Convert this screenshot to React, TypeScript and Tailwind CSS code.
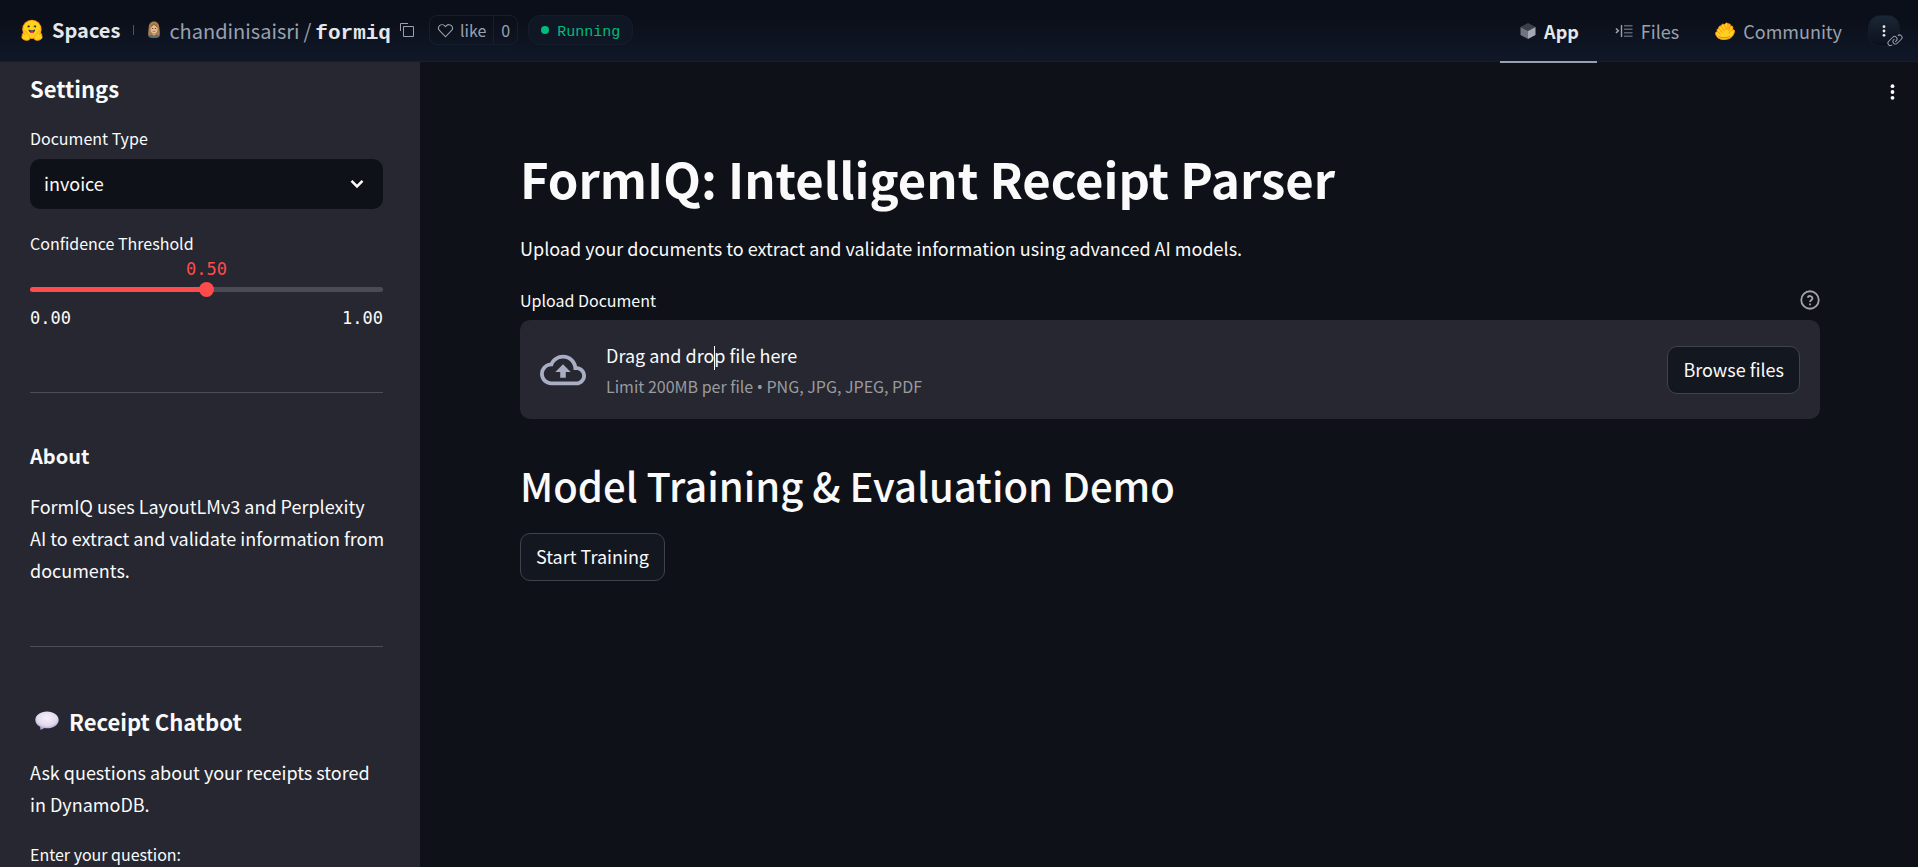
import { useState } from "react";

function HuggingLogo() {
  return (
    <svg viewBox="0 0 95 88" className="h-[22px] w-6 shrink-0" aria-hidden="true">
      <circle cx="47.2" cy="41.7" r="38.7" fill="#ff9d0b" />
      <circle cx="47.2" cy="41.7" r="34.7" fill="#ffd21e" />
      <path fill="#3a3b45" d="M58.5 32.3c1.28.44 1.78 3.06 3.07 2.38a5 5 0 1 0-6.76-2.07c.61 1.15 2.55-.72 3.7-.32ZM34.95 32.3c-1.28.44-1.79 3.06-3.07 2.38a5 5 0 1 1 6.76-2.07c-.61 1.15-2.56-.72-3.7-.32Z" />
      <path fill="#3a3b45" d="M46.96 56.29c9.83 0 13-8.76 13-13.26 0-2.34-1.57-1.6-4.09-.36-2.33 1.15-5.46 2.74-8.9 2.74-7.19 0-13-6.88-13-2.38s3.16 13.26 13 13.26Z" />
      <path fill="#ff323d" d="M39.4 53.5a8.7 8.7 0 0 1 7.6-4.6c3.5 0 6.400 1.900 7.800 4.700a13 13 0 0 1-15.400-.1Z" />
      <path fill="#ffd21e" stroke="#ff9d0b" strokeWidth="3.500" strokeLinejoin="round" d="M18 47c-4 0-5 4-3 8l3 7c-3-5-8-6-9-2-1 2 0 4 1 5-3 0-4 3-2 6-2 2-2 4 0 6 4 6 14 9 22 8 7-1 11-6 9-12-1-5-6-9-11-13-2-4-5-13-10-13Z" />
      <path fill="#ffd21e" stroke="#ff9d0b" strokeWidth="3.500" strokeLinejoin="round" d="M77 47c4 0 5 4 3 8l-3 7c3-5 8-6 9-2 1 2 0 4-1 5 3 0 4 3 2 6 2 2 2 4 0 6-4 6-14 9-22 8-7-1-11-6-9-12 1-5 6-9 11-13 2-4 5-13 10-13Z" />
    </svg>
  );
}

function Avatar() {
  return (
    <svg viewBox="0 0 14 18" className="h-[18px] w-3.5 shrink-0" aria-hidden="true">
      <path d="M7 .5C3.500.5 2 3 1.700 6.500c-.3 3-.9 6-.2 8.500C3 17 11 17 12.500 15c.7-2.500.1-5.500-.2-8.500C12 3 10.500.5 7 .5Z" fill="#a87d4f" />
      <path d="M1.500 15.500c1-1.500 3-2 5.500-2s4.500.5 5.500 2c-1.500 2-9.500 2-11 0Z" fill="#5d6b74" />
      <path d="M5.500 11h3v3c-1 .8-2 .8-3 0Z" fill="#cf9c72" />
      <ellipse cx="7" cy="7.800" rx="3.500" ry="4.500" fill="#e5bd95" />
      <path d="M3.400 7C3.600 4.500 5 3 7 2.800 9 3 10.400 4.500 10.600 7 9.500 5.800 8 4.800 7 3.800 6 4.800 4.500 5.800 3.400 7Z" fill="#8d6239" />
      <path d="M4.800 7.500h1.400M7.800 7.500h1.400" stroke="#5a3a22" strokeWidth=".9" />
      <path d="M5.700 10.300h2.600" stroke="#a9523f" strokeWidth=".8" />
    </svg>
  );
}

function CopyIcon() {
  return (
    <svg viewBox="0 0 32 32" className="size-4" fill="currentColor" aria-hidden="true">
      <path d="M28 10v18H10V10h18m0-2H10a2 2 0 0 0-2 2v18a2 2 0 0 0 2 2h18a2 2 0 0 0 2-2V10a2 2 0 0 0-2-2Z" />
      <path d="M4 18H2V4a2 2 0 0 1 2-2h14v2H4Z" />
    </svg>
  );
}

function HeartIcon() {
  return (
    <svg viewBox="0 0 32 32" className="size-[17px]" fill="currentColor" aria-hidden="true">
      <path d="M22.450 6a5.470 5.470 0 0 1 3.910 1.640 5.700 5.700 0 0 1 0 8L16 26.130 5.640 15.640a5.700 5.700 0 0 1 0-8 5.480 5.480 0 0 1 7.820 0L16 10.240l2.530-2.580A5.440 5.440 0 0 1 22.450 6m0-2a7.470 7.470 0 0 0-5.340 2.240L16 7.360l-1.110-1.120a7.490 7.490 0 0 0-10.680 0 7.720 7.720 0 0 0 0 10.820L16 29l11.790-11.940a7.720 7.720 0 0 0 0-10.820A7.490 7.490 0 0 0 22.450 4Z" />
    </svg>
  );
}

function CubeIcon() {
  return (
    <svg viewBox="0 0 16 18" className="h-[18px] w-4" aria-hidden="true">
      <path d="M8 1 15.500 5 8 9 .5 5Z" fill="#3b3f49" />
      <path d="M.5 5 8 9v8L.5 13Z" fill="#6f7480" />
      <path d="M15.500 5 8 9v8l7.500-4Z" fill="#a3a8b4" />
    </svg>
  );
}

function FilesIcon() {
  return (
    <svg viewBox="0 0 18 14" className="h-3.5 w-[18px]" fill="none" aria-hidden="true">
      <path d="M1 4.500 3.300 6.800 1 9" stroke="#9ca3af" strokeWidth="1.600" />
      <path d="M6.500 1v12" stroke="#9ca3af" strokeWidth="1.400" />
      <path d="M9 1.700h8.500M9 5.200h8.500M9 8.700h8.500M9 12.200h8.500" stroke="#5b616d" strokeWidth="1.400" />
    </svg>
  );
}

function HandIcon() {
  return (
    <svg viewBox="0 0 20 18" className="h-[18px] w-5" aria-hidden="true">
      <path
        d="M.8 12.500C.2 11 1 9.800 2.400 9.600 1.600 7.800 2.400 6.600 3.800 6.600 3.400 4.800 4.600 3.600 6 4.200 6.200 2.400 8 1.600 9.300 2.700L10.500 1.500c1-.9 2.300-.5 2.500.7 1.100-.8 2.500-.1 2.300 1.300l-.3 1.300.8-.6c1.200-.6 2.300.3 2 1.600L17.300 8c1.500-.7 2.500.2 2.100 1.700-.5 1.800-1 3.400-2.400 4.900-1.800 1.900-4.600 2.900-8 2.900-4.500 0-7.300-2-8.200-5Z"
        fill="#ffd021"
        stroke="#ff9d0b"
      />
      <path d="M2.400 9.600 5.200 12M3.800 6.600 7.300 10.300M6 4.200 9.400 8.700M9.300 2.700 11.500 7.500M13 2.200 12.900 7.200M15 4.800 13.700 8.500M17.300 8c-1.700.5-3 1.600-3.300 3.200" fill="none" stroke="#f59300" strokeWidth=".9" strokeLinecap="round" />
      <path d="M3.800 14.600c3 1.600 7.500 1.600 11 0" fill="none" stroke="#d98a1c" strokeWidth="1" strokeLinecap="round" />
    </svg>
  );
}

function Kebab({ className }: { className: string }) {
  return (
    <svg viewBox="0 0 6 20" className={className} fill="currentColor" aria-hidden="true">
      <circle cx="3" cy="3.500" r="2.100" />
      <circle cx="3" cy="10" r="2.100" />
      <circle cx="3" cy="16.500" r="2.100" />
    </svg>
  );
}

function LinkIcon() {
  return (
    <svg viewBox="0 0 32 32" className="size-4" fill="currentColor" aria-hidden="true">
      <path d="M29.250 6.760a6 6 0 0 0-8.500 0l1.420 1.420a4 4 0 1 1 5.670 5.670l-8 8a4 4 0 1 1-5.670-5.660l1.410-1.420-1.410-1.420-1.420 1.420a6 6 0 0 0 0 8.500A6 6 0 0 0 17 25a6 6 0 0 0 4.270-1.760l8-8a6 6 0 0 0-.02-8.480Z" />
      <path d="M4.190 24.820a4 4 0 0 1 0-5.670l8-8a4 4 0 0 1 5.670 0A3.940 3.940 0 0 1 19 14a4 4 0 0 1-1.170 2.850L15.710 19l1.420 1.420 2.120-2.120a6 6 0 0 0-8.510-8.510l-8 8a6 6 0 0 0 0 8.510A6 6 0 0 0 7 28a6.070 6.070 0 0 0 4.280-1.760l-1.420-1.420a4 4 0 0 1-5.670 0Z" />
    </svg>
  );
}

function SpeechBubble() {
  return (
    <svg viewBox="0 0 24 20" className="h-5 w-6 shrink-0" aria-hidden="true">
      <defs>
        <radialGradient id="bubble" cx=".5" cy=".35" r=".65">
          <stop offset="0" stopColor="#f6f1fa" />
          <stop offset=".65" stopColor="#e3d9ee" />
          <stop offset="1" stopColor="#a996c6" />
        </radialGradient>
      </defs>
      <path d="M12 .5c6.500 0 11.700 3.600 11.700 8.400S18.500 17.300 12 17.300c-1 0-1.900-.1-2.800-.2-1.300 1-2.700 1.700-4.400 1.700.6-.8.700-2 .3-3C2.200 14.200.3 11.700.3 8.900.3 4.100 5.500.5 12 .5Z" fill="url(#bubble)" />
    </svg>
  );
}

function CloudUpload() {
  return (
    <svg viewBox="0 0 24 24" className="size-[46px]" fill="currentColor" aria-hidden="true">
      <path d="M19.350 10.040A7.490 7.490 0 0 0 12 4C9.110 4 6.600 5.640 5.350 8.040A5.994 5.994 0 0 0 0 14c0 3.310 2.690 6 6 6h13c2.760 0 5-2.240 5-5 0-2.640-2.050-4.780-4.650-4.960ZM19 18H6c-2.210 0-4-1.790-4-4s1.790-4 4-4h.71C7.370 7.690 9.480 6 12 6c3.040 0 5.500 2.460 5.500 5.500v.5H19c1.660 0 3 1.340 3 3s-1.340 3-3 3ZM8 13h2.550v3h2.900v-3H16l-4-4-4 4Z" />
    </svg>
  );
}

function Header() {
  return (
    <header className="flex h-[62px] shrink-0 items-center justify-between border-b border-[#171d2c] bg-linear-to-b from-[#0b0f19] from-30% to-[#101828] pr-[18px] pl-5 text-lg text-gray-400">
      <div className="flex items-center">
        <a href="#spaces" className="flex items-center gap-2 text-xl font-bold text-gray-200">
          <HuggingLogo />
          Spaces
        </a>
        <span className="mx-[13px] h-2.5 w-px bg-gray-600" />
        <div className="flex items-center gap-2">
          <Avatar />
          <div className="flex items-baseline gap-1 pt-1 text-xl">
            <a href="#owner">chandinisaisri</a>
            <span>/</span>
            <a href="#formiq" className="font-['Liberation_Mono',monospace] text-[21px] font-bold text-gray-200">formiq</a>
          </div>
          <button type="button" aria-label="Copy space name"><CopyIcon /></button>
        </div>
        <div className="ml-3.5 flex h-[30px] items-center rounded-lg border border-[#171e2d] text-base">
          <button type="button" className="flex h-full items-center gap-1.5 border-r border-[#171e2d] px-[7px]">
            <HeartIcon />
            like
          </button>
          <button type="button" className="px-[7px]">0</button>
        </div>
        <div className="ml-2.5 flex h-[30px] items-center gap-2 rounded-xl border border-[#151d2d] bg-[#101724] px-3 text-[15px] text-[#00bc7d]">
          <span className="size-2 rounded-full bg-[#00bc7d]" />
          <span className="pt-1 font-['Liberation_Mono',monospace]">Running</span>
        </div>
      </div>
      <nav className="flex h-full items-center">
        <a href="#app" className="relative flex h-full items-center gap-2 pr-[18px] pl-5 font-bold text-gray-200 after:absolute after:inset-x-0 after:-bottom-0.5 after:h-0.5 after:bg-gray-400">
          <CubeIcon />
          App
        </a>
        <a href="#files" className="flex h-full items-center gap-2 px-[18px]">
          <FilesIcon />
          Files
        </a>
        <a href="#community" className="flex h-full items-center gap-2 px-[18px]">
          <HandIcon />
          Community
        </a>
        <button type="button" aria-label="More options" className="relative ml-2 flex size-8 items-center justify-center rounded-xl border border-[#151c2a] bg-linear-to-b from-[#1b2636] to-[#0c111c] text-gray-200">
          <Kebab className="h-3.5 w-1" />
          <span className="absolute -right-1 -bottom-0.5 text-gray-400"><LinkIcon /></span>
        </button>
      </nav>
    </header>
  );
}

function Sidebar() {
  const [threshold, setThreshold] = useState(0.5);
  const filled = `${threshold * 100}%`;
  return (
    <aside className="w-[420px] shrink-0 overflow-hidden bg-[#262730] pr-[35px] pl-[30px] text-lg leading-8">
      <div className="pr-0.5">
        <h2 className="pt-2.5 text-[22px] leading-8 font-bold">Settings</h2>
        <div className="mt-[22px] flex flex-col">
          <label htmlFor="doc-type" className="text-base leading-6">Document Type</label>
          <div className="relative mt-[9px]">
            <select id="doc-type" className="h-[50px] w-full appearance-none rounded-[10px] bg-[#0e1117] px-3.5 pb-0.5 text-lg">
              <option>invoice</option>
              <option>receipt</option>
            </select>
            <svg viewBox="0 0 14 10" className="pointer-events-none absolute top-5 right-[19px] h-2.5 w-3.5" fill="none" aria-hidden="true">
              <path d="M1.500 1.800 7 7.300l5.500-5.500" stroke="#fafafa" strokeWidth="2.600" />
            </svg>
          </div>
        </div>
        <div className="mt-[22px] flex flex-col">
          <label htmlFor="threshold" className="text-base leading-6">Confidence Threshold</label>
          <output htmlFor="threshold" className="mt-0.5 self-center font-['DejaVu_Sans_Mono',monospace] text-[17px] leading-6 text-[#ff4b4b]">{threshold.toFixed(2)}</output>
          <input
            id="threshold"
            type="range"
            min="0"
            max="1"
            step="0.05"
            value={threshold}
            onChange={(e) => setThreshold(Number(e.target.value))}
            style={{ backgroundImage: `linear-gradient(to right, #ff4b4b ${filled}, #4a4b55 ${filled})` }}
            className="mt-1.5 h-[5px] w-full appearance-none rounded-full [&::-webkit-slider-thumb]:size-[15px] [&::-webkit-slider-thumb]:appearance-none [&::-webkit-slider-thumb]:rounded-full [&::-webkit-slider-thumb]:bg-[#ff4b4b]"
          />
          <div className="mt-3.5 flex justify-between font-['DejaVu_Sans_Mono',monospace] text-[17px] leading-6">
            <span>0.00</span>
            <span>1.00</span>
          </div>
        </div>
        <hr className="mt-[62px] border-[#4c4d56]" />
      </div>
      <h3 className="mt-[47px] text-xl leading-8 font-bold">About</h3>
      <p className="mt-[18px]">FormIQ uses LayoutLMv3 and Perplexity AI&nbsp;to extract and validate information from documents.</p>
      <hr className="mt-[60px] mr-0.5 border-[#4c4d56]" />
      <h3 className="mt-[58px] flex items-center gap-2.5 pl-[5px] text-[22px] leading-8 font-bold">
        <SpeechBubble />
        Receipt Chatbot
      </h3>
      <p className="mt-[19px]">Ask questions about your receipts stored in DynamoDB.</p>
      <div className="mt-[22px] mr-0.5 flex flex-col gap-2">
        <label htmlFor="question" className="text-base leading-6">Enter your question:</label>
        <input id="question" type="text" className="h-[50px] rounded-[10px] bg-[#0e1117] px-3.5" />
      </div>
    </aside>
  );
}

function Main() {
  return (
    <main className="relative min-w-0 flex-1 pt-[83px] pr-[98px] pl-[100px] text-lg">
      <button type="button" aria-label="App menu" className="absolute top-5 right-[21px] p-px">
        <Kebab className="h-[18px] w-[7px]" />
      </button>
      <h1 className="text-[49px] leading-[66px] font-bold">FormIQ: Intelligent Receipt Parser</h1>
      <p className="mt-[21px] leading-8">Upload your documents to extract and validate information using advanced AI models.</p>
      <div className="mt-6 flex h-6 items-center justify-between">
        <span id="upload-label" className="text-base">Upload Document</span>
        <button type="button" aria-label="Help" className="text-[#a3a4a8]">
          <svg viewBox="0 0 24 24" className="size-5" fill="none" stroke="currentColor" strokeWidth="2.200" aria-hidden="true">
            <circle cx="12" cy="12" r="10.500" />
            <path d="M9.100 9.200a3 3 0 0 1 5.800 1c0 2-2.900 2.200-2.900 4.200M12 16.200v2.200" />
          </svg>
        </button>
      </div>
      <section aria-labelledby="upload-label" className="mt-2 flex h-[99px] items-center rounded-[10px] bg-[#262730] px-5">
        <span className="text-[#a9aec4]"><CloudUpload /></span>
        <div className="ml-5 flex-1 pt-0.5">
          <div className="leading-8">
            Drag and dro<span className="-mr-px inline-block h-6 w-px bg-white align-middle" />p file here
          </div>
          <div className="text-base leading-[30px] text-[#9a9b9f]">Limit 200MB per file <span className="font-['Noto_Sans',sans-serif]">•</span> PNG, JPG, JPEG, PDF</div>
        </div>
        <button type="button" className="h-12 rounded-[10px] border border-[#41434c] bg-[#131720] px-[15px] pb-0.5">Browse files</button>
      </section>
      <h2 className="mt-[39px] text-[40px] leading-[54px] font-medium">Model Training &amp; Evaluation Demo</h2>
      <button type="button" className="mt-[21px] h-12 rounded-[10px] border border-[#41434c] bg-[#131720] px-[15px] pb-0.5">Start Training</button>
    </main>
  );
}

export default function App() {
  return (
    <div className="flex h-screen flex-col overflow-hidden bg-[#0e1117] font-['Noto_Sans_CJK_SC','Noto_Sans',sans-serif] text-[#fafafa]">
      <Header />
      <div className="flex min-h-0 flex-1">
        <Sidebar />
        <Main />
      </div>
    </div>
  );
}
